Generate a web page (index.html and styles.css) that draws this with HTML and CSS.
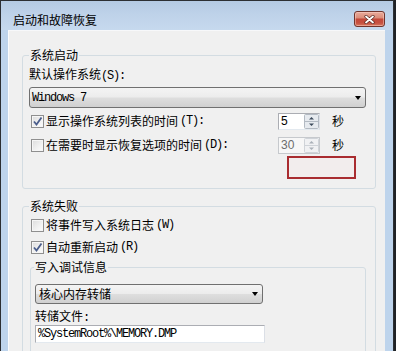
FILE: index.html
```html
<!DOCTYPE html>
<html lang="zh-CN">
<head>
<meta charset="utf-8">
<title>启动和故障恢复</title>
<link rel="stylesheet" href="styles.css">
</head>
<body>
<div class="win">
  <div class="titlebar">
    <span class="title">启动和故障恢复</span>
    <button class="close" aria-label="关闭">
      <svg width="11" height="9" viewBox="0 0 11 9">
        <path d="M2 1.5 L9 7.5 M9 1.5 L2 7.5" stroke="#5a2a24" stroke-width="3.2" stroke-linecap="round"/>
        <path d="M2 1.5 L9 7.5 M9 1.5 L2 7.5" stroke="#ffffff" stroke-width="1.8" stroke-linecap="round"/>
      </svg>
    </button>
  </div>
  <div class="frame">
    <div class="client">
      <fieldset class="group g1">
        <legend>系统启动</legend>
        <div class="lbl">默认操作系统<span class="k">(S):</span></div>
        <div class="combo c1"><span class="val mono">Windows 7</span><span class="arrow"></span></div>
        <div class="row r1">
          <div class="chk"><span class="box"><svg width="11" height="11" viewBox="0 0 11 11"><path d="M2 5.5 L4.5 8.5 L9.5 1.5" fill="none" stroke="#4b5e8c" stroke-width="1.8"/></svg></span>显示操作系统列表的时间<span class="k">(T):</span></div>
          <div class="spin"><span class="num">5</span><span class="btns"><svg width="15" height="15" viewBox="0 0 15 15"><rect x="0.5" y="0.5" width="14" height="14" rx="1" fill="#e6eaef" stroke="#b3bac3"/><line x1="1" y1="7.5" x2="14" y2="7.5" stroke="#b3bac3"/><path d="M5 5.5 L7.5 3 L10 5.5 Z" fill="#3c4a5c"/><path d="M5 9.5 L7.5 12 L10 9.5 Z" fill="#3c4a5c"/></svg></span></div>
          <span class="unit">秒</span>
        </div>
        <div class="row r2">
          <div class="chk"><span class="box"></span>在需要时显示恢复选项的时间<span class="k">(D):</span></div>
          <div class="spin off"><span class="num">30</span><span class="btns"><svg width="15" height="15" viewBox="0 0 15 15"><rect x="0.5" y="0.5" width="14" height="14" rx="1" fill="#f0f1f3" stroke="#cfd3d8"/><line x1="1" y1="7.5" x2="14" y2="7.5" stroke="#cfd3d8"/><path d="M5 5.5 L7.5 3 L10 5.5 Z" fill="#a9b0b8"/><path d="M5 9.5 L7.5 12 L10 9.5 Z" fill="#a9b0b8"/></svg></span></div>
          <span class="unit">秒</span>
        </div>
        <div class="mark"></div>
      </fieldset>

      <fieldset class="group g2">
        <legend>系统失败</legend>
        <div class="row r3">
          <div class="chk"><span class="box"></span>将事件写入系统日志<span class="k">(W)</span></div>
        </div>
        <div class="row r4">
          <div class="chk"><span class="box"><svg width="11" height="11" viewBox="0 0 11 11"><path d="M2 5.5 L4.5 8.5 L9.5 1.5" fill="none" stroke="#4b5e8c" stroke-width="1.8"/></svg></span>自动重新启动<span class="k">(R)</span></div>
        </div>
        <fieldset class="group g3">
          <legend>写入调试信息</legend>
          <div class="combo c2"><span class="val">核心内存转储</span><span class="arrow"></span></div>
          <div class="lbl l2">转储文件<span class="k">:</span></div>
          <div class="input mono">%SystemRoot%\MEMORY.DMP</div>
          <div class="lbl l3">&nbsp;</div>
        </fieldset>
      </fieldset>
    </div>
  </div>
</div>
</body>
</html>
```
FILE: styles.css
```css
* { box-sizing: border-box; }
html, body { margin: 0; padding: 0; }
body {
  width: 396px;
  height: 351px;
  overflow: hidden;
  background: #1f2226;
  font: 12px/14px "Noto Sans CJK SC", "Noto Sans", sans-serif;
  color: #000;
}
.win {
  width: 394px;
  height: 420px;
  border: 1px solid #2c2f33;
  border-bottom: 0;
  display: flex;
  flex-direction: column;
  background: #bed4ec;
}
.titlebar {
  height: 29px;
  flex: none;
  display: flex;
  align-items: flex-start;
  padding-left: 12px;
  background: linear-gradient(180deg, #b4cae3 0%, #bed2e9 45%, #c6d9ee 100%);
}
.title {
  margin-top: 12px;
  color: #000;
}
.close {
  margin: 10px 8px 0 auto;
  width: 31px;
  height: 16px;
  padding: 0;
  border: 1px solid #70342c;
  border-radius: 3px;
  background: linear-gradient(180deg, #e9aa9b 0%, #dc8f7c 40%, #c4493a 52%, #c65040 78%, #d8785e 100%);
  box-shadow: inset 0 0 0 1px rgba(255, 220, 210, 0.45);
  display: flex;
  align-items: center;
  justify-content: center;
}
.close svg { display: block; }
.frame {
  flex: 1;
  padding: 0 8px 0 7px;
  display: flex;
}
.client {
  flex: 1;
  background: #f0f0f0;
  border-left: 1px solid #fbfcfd;
  border-top: 1px solid #f7f8fa;
  padding: 0 9px 0 13px;
}
.group {
  margin: 0;
  min-width: 0;
  border: 1px solid #d3dce2;
  border-radius: 3px;
  padding: 5px 9px 9px 6px;
}
.group legend {
  padding: 0 1px;
  line-height: 14px;
}
.g1 { margin-top: 17px; }
.g2 { margin-top: 10px; padding-top: 4px; }
.g3 {
  margin: 5px 0 0 1px;
  padding: 10px 8px 10px 4px;
}
.g3 legend { margin-left: -1px; }
.lbl { height: 14px; }
.k, .mono {
  font-family: "Liberation Mono", monospace;
  font-size: 12px;
  letter-spacing: -1.2px;
}
.combo {
  display: flex;
  align-items: center;
  border: 1px solid #707070;
  border-radius: 3px;
  background: linear-gradient(180deg, #f4f4f4 0%, #ececec 48%, #dedede 52%, #d0d0d0 100%);
}
.c1 {
  margin-top: 6px;
  height: 21px;
  padding-left: 2px;
}
.c2 {
  width: 228px;
  height: 20px;
  padding-left: 3px;
}
.arrow {
  margin-left: auto;
  margin-right: 4px;
  width: 0;
  height: 0;
  border-left: 3.5px solid transparent;
  border-right: 3.5px solid transparent;
  border-top: 4px solid #000;
}
.row {
  display: flex;
  align-items: center;
}
.r1 { margin-top: 4px; height: 18px; }
.r2 { margin-top: 6px; height: 18px; }
.r3 { height: 16px; }
.r4 { margin-top: 6px; height: 16px; }
.chk {
  display: flex;
  align-items: center;
  padding-left: 2px;
  gap: 2px;
  white-space: nowrap;
}
.r1 .chk, .r2 .chk { width: 249px; }
.box {
  width: 13px;
  height: 13px;
  flex: none;
  border: 1px solid #8f8f8f;
  background: linear-gradient(135deg, #dcdcdc 0%, #f0f0f0 55%, #fdfdfd 100%);
  box-shadow: inset 0 0 0 1px #f6f6f6;
  display: flex;
  align-items: center;
  justify-content: center;
}
.box svg { display: block; }
.spin {
  width: 42px;
  height: 17px;
  display: flex;
  align-items: center;
  border: 1px solid #abadb3;
  border-right-color: #dbdfe6;
  border-bottom-color: #e3e9ef;
  background: #fff;
  padding-left: 2px;
}
.spin .num {
  flex: 1;
  font-family: "Liberation Sans", sans-serif;
  font-size: 12px;
}
.spin .btns { display: flex; }
.spin .btns svg { display: block; }
.spin.off {
  border-color: #c6c9cd;
  background: #f7f7f7;
}
.spin.off .num { color: #6d6d6d; }
.unit { margin-left: 12px; }
.mark {
  margin: 2px 0 0 258px;
  width: 69px;
  height: 23px;
  border: 2px solid #a92c30;
  background: #f2eded;
}
.l2 { margin-top: 5px; }
.input {
  margin-top: 2px;
  width: 230px;
  height: 18px;
  border: 1px solid #abadb3;
  border-right-color: #dbdfe6;
  border-bottom-color: #e3e9ef;
  background: #fff;
  padding-left: 2px;
  line-height: 16px;
}
.l3 { height: 30px; }
```
